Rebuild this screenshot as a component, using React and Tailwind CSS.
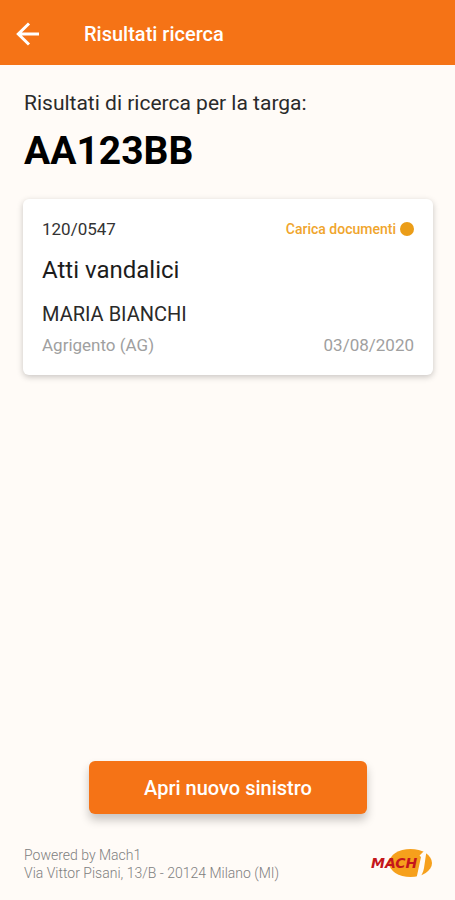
function BackArrow() {
  return (
    <svg viewBox="0 0 24 24" className="size-6" fill="none" stroke="currentColor" strokeWidth="3" aria-hidden="true">
      <path d="M23 12H2.5M13 1.5L2.3 12L13 22.5" />
    </svg>
  );
}

function MachLogo() {
  return (
    <svg viewBox="0 0 64 32" className="h-8 w-16 shrink-0" role="img" aria-label="Mach 1">
      <ellipse cx="41.5" cy="15" rx="21.5" ry="14" fill="#f6a01c" />
      <path d="M50.5 7.5L55 3H57.5L55 20Q54 26 50 30H47.5L52 9Z" fill="#fffbf7" />
      <text x="2" y="20" fontSize="14" fontWeight="700" fontStyle="italic" fill="#c4161c" className="font-['DejaVu_Sans',sans-serif]">
        MACH
      </text>
    </svg>
  );
}

function ClaimCard({ number, status, title, holder, place, date }) {
  return (
    <article className="mt-6 rounded-md bg-white px-[19px] py-[18px] shadow-[0_2px_6px_rgba(0,0,0,0.22)]">
      <div className="flex items-center justify-between leading-6">
        <span className="text-[17px] text-[#333]">{number}</span>
        <span className="flex items-center gap-1 text-sm font-medium text-[#f0a52c]">
          {status}
          <span className="size-3.5 rounded-full bg-[#eb9d18]" />
        </span>
      </div>
      <h2 className="mt-[13px] text-2xl leading-8 text-[#1c1c1c]">{title}</h2>
      <p className="mt-4 text-xl leading-6 text-[#2a2a2a]">{holder}</p>
      <div className="mt-[7px] flex justify-between text-[17px] leading-6 text-[#a0a0a0]">
        <span>{place}</span>
        <time dateTime="2020-08-03">{date}</time>
      </div>
    </article>
  );
}

export default function App() {
  return (
    <div className="flex min-h-screen flex-col bg-[#fffbf7] font-[Roboto,sans-serif] text-black">
      <header className="flex h-[65px] items-center gap-11 bg-[#f57316] px-4 pt-0.5 text-white">
        <button type="button" aria-label="Indietro">
          <BackArrow />
        </button>
        <h1 className="text-xl font-medium">Risultati ricerca</h1>
      </header>

      <main className="flex flex-1 flex-col pt-6 pr-[22px] pl-[23px]">
        <p className="pl-px text-[21px] leading-7 text-[#2a2a2a]">Risultati di ricerca per la targa:</p>
        <p className="mt-2.5 pl-px text-[39px] leading-[48px] font-bold">AA123BB</p>
        <ClaimCard
          number="120/0547"
          status="Carica documenti"
          title="Atti vandalici"
          holder="MARIA BIANCHI"
          place="Agrigento (AG)"
          date="03/08/2020"
        />
        <button
          type="button"
          className="mx-auto mt-auto h-[53px] w-[278px] rounded-md bg-[#f57316] text-xl font-medium text-white shadow-[0_6px_10px_rgba(0,0,0,0.22)]"
        >
          Apri nuovo sinistro
        </button>
      </main>

      <footer className="flex items-center justify-between pt-8 pr-[22px] pb-[18px] pl-6 text-sm leading-[18px] font-light text-[#808080]">
        <p>
          Powered by Mach1
          <br />
          Via Vittor Pisani, 13/B - 20124 Milano (MI)
        </p>
        <MachLogo />
      </footer>
    </div>
  );
}
